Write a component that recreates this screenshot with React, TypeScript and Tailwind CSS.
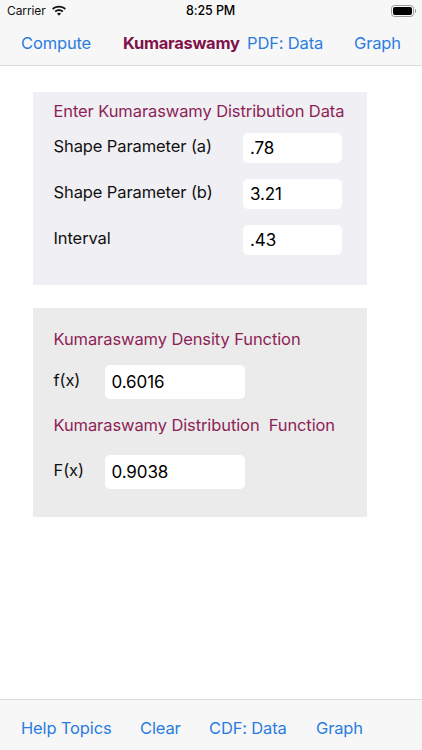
const navLink = "text-[16.5px] leading-[22px] tracking-[-0.15px] text-[#2b7de0]";
const plum = "text-[#8e1f56]";

function Field({ value, className }: { value: string; className: string }) {
  return (
    <div className={`flex items-center rounded-[5px] bg-white pl-[7px] pt-[2px] text-[17px] text-black ${className}`}>
      {value}
    </div>
  );
}

function InputRow({ label, value }: { label: string; value: string }) {
  return (
    <div className="flex h-[30px] items-start justify-between pr-[25.5px]">
      <span className="text-[16.5px] leading-[26px] text-[#111]">{label}</span>
      <Field value={value} className="h-[30px] w-[98.5px]" />
    </div>
  );
}

function ResultRow({ label, value }: { label: string; value: string }) {
  return (
    <div className="flex h-[34px] items-start">
      <span className="w-[51px] text-[16.5px] leading-[30px] text-[#111]">{label}</span>
      <Field value={value} className="h-[34px] w-[140.5px]" />
    </div>
  );
}

function WifiIcon() {
  return (
    <svg width="16" height="12" viewBox="0 0 16 12" fill="#111">
      <path d="M8 2.600c2.200 0 4.200.8 5.700 2.200l1.200-1.300C13.100 1.800 10.700.8 8 .8S2.900 1.800 1.100 3.500l1.200 1.300C3.800 3.400 5.800 2.600 8 2.600z" />
      <path d="M8 6.100c1.200 0 2.300.4 3.200 1.200l1.200-1.300C11.200 4.900 9.700 4.300 8 4.300S4.800 4.900 3.600 6l1.200 1.300C5.700 6.500 6.800 6.100 8 6.100z" />
      <path d="M8 7.800c-.8 0-1.500.3-2 .8l2 2.200 2-2.200c-.5-.5-1.200-.8-2-.8z" />
    </svg>
  );
}

function BatteryIcon() {
  return (
    <div className="flex items-center gap-px">
      <div className="h-[12px] w-[23px] rounded-[3.5px] border border-[#9a9a9a] p-px">
        <div className="h-full w-full rounded-[2px] bg-black" />
      </div>
      <div className="h-[4px] w-px rounded-r bg-[#9a9a9a]" />
    </div>
  );
}

export default function App() {
  return (
    <div className="flex h-[750px] w-[422px] flex-col overflow-hidden bg-white font-['Inter','Liberation_Sans',sans-serif] tracking-[-0.1px]">
      <header className="h-[66px] border-b border-[#dcdcdc] bg-[#f7f7f7]">
        <div className="relative flex h-[22px] items-center justify-between pl-[7px] pr-[6px]">
          <div className="flex items-center gap-[5px] text-[12px] text-[#111]">
            Carrier
            <WifiIcon />
          </div>
          <span className="absolute left-[186px] text-[12.5px] font-medium text-black">8:25 PM</span>
          <BatteryIcon />
        </div>
        <nav className="flex h-[43px] items-center pl-[21px] pb-[2px]">
          <span className={`${navLink} w-[102px]`}>Compute</span>
          <span className="w-[124px] text-[16.5px] leading-[22px] font-bold tracking-[-0.3px] text-[#80114a]">Kumaraswamy</span>
          <span className={`${navLink} w-[107px]`}>PDF: Data</span>
          <span className={navLink}>Graph</span>
        </nav>
      </header>

      <main className="flex flex-1 flex-col gap-[23px] pl-[33px] pr-[55px] pt-[26px]">
        <section className="h-[193px] bg-[#efeff4] pl-[20.5px] pt-[9px]">
          <h2 className={`text-[16.5px] leading-[20px] ${plum}`}>Enter Kumaraswamy Distribution Data</h2>
          <div className="mt-[12px] flex flex-col gap-4">
            <InputRow label="Shape Parameter (a)" value=".78" />
            <InputRow label="Shape Parameter (b)" value="3.21" />
            <InputRow label="Interval" value=".43" />
          </div>
        </section>

        <section className="h-[209px] bg-[#ebebeb] pl-[20.5px] pt-[21px]">
          <h2 className={`text-[16.5px] leading-[20px] ${plum}`}>Kumaraswamy Density Function</h2>
          <div className="mt-[16px]">
            <ResultRow label="f(x)" value="0.6016" />
          </div>
          <h2 className={`mt-[16px] whitespace-pre text-[16.5px] leading-[20px] ${plum}`}>Kumaraswamy Distribution  Function</h2>
          <div className="mt-[20px]">
            <ResultRow label="F(x)" value="0.9038" />
          </div>
        </section>
      </main>

      <footer className="flex h-[51px] items-center border-t border-[#dcdcdc] bg-[#f7f7f7] pl-[21px] pt-[5px]">
        <span className={`${navLink} w-[119px]`}>Help Topics</span>
        <span className={`${navLink} w-[69px]`}>Clear</span>
        <span className={`${navLink} w-[107px]`}>CDF: Data</span>
        <span className={navLink}>Graph</span>
      </footer>
    </div>
  );
}
